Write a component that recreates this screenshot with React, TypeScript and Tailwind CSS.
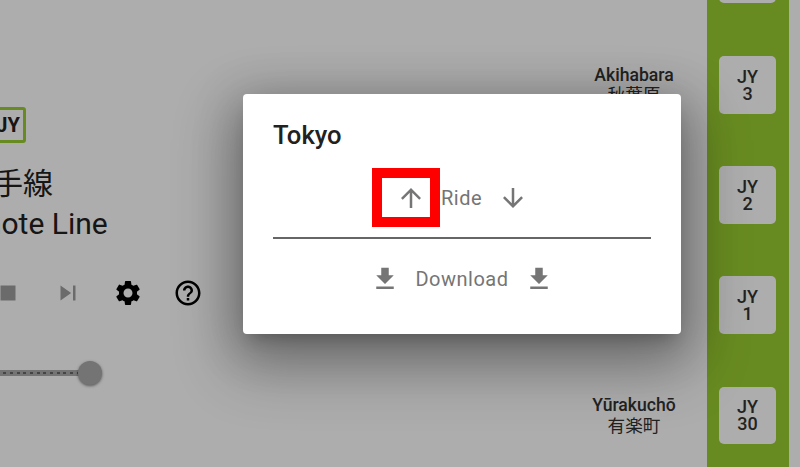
import type { ReactNode } from "react";

const LINE_STATIONS = [
  { code: "4", en: "Okachimachi", ja: "御徒町" },
  { code: "3", en: "Akihabara", ja: "秋葉原" },
  { code: "2", en: "Kanda", ja: "神田" },
  { code: "1", en: "Tokyo", ja: "東京" },
  { code: "30", en: "Yūrakuchō", ja: "有楽町" },
];

const ICONS = {
  play: "M8 5v14l11-7z",
  stop: "M6 6h12v12H6z",
  skip: "M6 18l8.5-6L6 6v12zM16 6v12h2V6h-2z",
  settings:
    "M19.14,12.94c0.04-0.3,0.06-0.61,0.06-0.94c0-0.32-0.02-0.64-0.07-0.94l2.03-1.58c0.18-0.14,0.23-0.41,0.12-0.61 l-1.92-3.32c-0.12-0.22-0.37-0.29-0.59-0.22l-2.39,0.96c-0.5-0.38-1.03-0.7-1.62-0.94L14.4,2.81c-0.04-0.24-0.24-0.41-0.48-0.41 h-3.84c-0.24,0-0.43,0.17-0.47,0.41L9.25,5.35C8.66,5.59,8.12,5.92,7.63,6.29L5.24,5.33c-0.22-0.08-0.47,0-0.59,0.22L2.74,8.87 C2.62,9.08,2.66,9.34,2.86,9.48l2.03,1.58C4.84,11.36,4.8,11.69,4.8,12s0.02,0.64,0.07,0.94l-2.03,1.58 c-0.18,0.14-0.23,0.41-0.12,0.61l1.92,3.32c0.12,0.22,0.37,0.29,0.59,0.22l2.39-0.96c0.5,0.38,1.03,0.7,1.62,0.94l0.36,2.54 c0.05,0.24,0.24,0.41,0.48,0.41h3.84c0.24,0,0.44-0.17,0.47-0.41l0.36-2.54c0.59-0.24,1.13-0.56,1.62-0.94l2.39,0.96 c0.22,0.08,0.47,0,0.59-0.22l1.92-3.32c0.12-0.22,0.07-0.47-0.12-0.61L19.14,12.94z M12,15.6c-1.98,0-3.6-1.62-3.6-3.6 s1.62-3.6,3.6-3.6s3.6,1.62,3.6,3.6S13.98,15.6,12,15.6z",
  help: "M11 18h2v-2h-2v2zm1-16C6.48 2 2 6.48 2 12s4.48 10 10 10 10-4.48 10-10S17.52 2 12 2zm0 18c-4.41 0-8-3.59-8-8s3.59-8 8-8 8 3.59 8 8-3.59 8-8 8zm0-14c-2.21 0-4 1.79-4 4h2c0-1.1.9-2 2-2s2 .9 2 2c0 2-3 1.75-3 5h2c0-2.25 3-2.5 3-5 0-2.21-1.79-4-4-4z",
  up: "M4 12l1.41 1.41L11 7.83V20h2V7.83l5.58 5.59L20 12l-8-8-8 8z",
  down: "M20 12l-1.41-1.41L13 16.17V4h-2v12.17l-5.58-5.59L4 12l8 8 8-8z",
  download: "M19 9h-4V3H9v6H5l7 7 7-7zM5 18v2h14v-2H5z",
};

function Icon({ d, className }: { d: string; className: string }) {
  return (
    <svg viewBox="0 0 24 24" className={`h-[30px] w-[30px] shrink-0 fill-current ${className}`}>
      <path d={d} />
    </svg>
  );
}

function ControlButton({ children }: { children: ReactNode }) {
  return <div className="flex w-[60px] justify-center">{children}</div>;
}

function StationRow({ code, en, ja }: { code: string; en: string; ja: string }) {
  return (
    <div className="flex h-[57.8px] items-center">
      <div className="w-[170px] shrink-0 pt-[1px] text-center text-[17.6px] leading-[20.5px] text-[#333333]">
        <div className="font-medium">{en}</div>
        <div>{ja}</div>
      </div>
      <div className="flex h-[57.8px] w-[57px] shrink-0 flex-col items-center justify-center rounded-[5px] bg-white text-center text-[18px] leading-[17px] font-medium text-[#333333]">
        <span>JY</span>
        <span>{code}</span>
      </div>
    </div>
  );
}

export default function App() {
  return (
    <div className="relative flex h-[467px] w-[800px] overflow-hidden bg-white font-['Roboto','Noto_Sans_CJK_JP',sans-serif]">
      {/* left panel runs off the edge of the page */}
      <div className="ml-[-82px] flex w-[300px] shrink-0 flex-col items-start pt-[107px]">
        <div className="ml-[72px] flex h-[36px] w-[36px] items-center justify-center rounded-[3px] border-[3px] border-[#9acd32] text-[20px] font-bold text-[#212121]">
          JY
        </div>
        <div className="mt-[23px] ml-[45px] text-[30px] leading-[36px] text-[#212121]">山手線</div>
        <div className="mt-[2px] ml-[-9px] text-[30px] leading-[40px] whitespace-nowrap text-[#212121]">
          Yamanote Line
        </div>
        <div className="mt-[34px] flex items-center">
          <ControlButton>
            <Icon d={ICONS.play} className="text-[#9e9e9e]" />
          </ControlButton>
          <ControlButton>
            <Icon d={ICONS.stop} className="text-[#9e9e9e]" />
          </ControlButton>
          <ControlButton>
            <Icon d={ICONS.skip} className="text-[#9e9e9e]" />
          </ControlButton>
          <ControlButton>
            <Icon d={ICONS.settings} className="text-black" />
          </ControlButton>
          <ControlButton>
            <Icon d={ICONS.help} className="text-black" />
          </ControlButton>
        </div>
        <div className="mt-[52px] ml-[32px] flex h-[26px] items-center">
          <div className="flex h-[6px] w-[129px] items-center bg-[#ababab]">
            <div className="h-[2px] w-full bg-[repeating-linear-gradient(90deg,#666666_0_3px,#ababab_3px_6.67px)]" />
          </div>
          <div className="-ml-[1px] h-[24px] w-[24px] rounded-full bg-[#ababab] shadow-[0_1px_3px_rgba(0,0,0,0.5)]" />
        </div>
      </div>

      <div className="flex-1" />

      {/* station line */}
      <div className="absolute top-0 right-[11px] h-[467px] w-[82px] bg-[#9acd32]" />
      <div className="relative mt-[-54.6px] mr-[24px] flex shrink-0 flex-col gap-[52.5px]">
        {LINE_STATIONS.map((station) => (
          <StationRow key={station.code} {...station} />
        ))}
      </div>

      {/* modal backdrop */}
      <div className="absolute inset-0 flex bg-black/32">
        <div className="mt-[94px] ml-[243px] flex h-[240px] w-[438px] flex-col rounded-[4px] bg-white px-[30px] shadow-[0_11px_15px_-7px_rgba(0,0,0,0.2),0_24px_60px_10px_rgba(0,0,0,0.3),0_9px_46px_8px_rgba(0,0,0,0.16)]">
          <div className="mt-[24px] text-[25.6px] leading-[34px] font-medium text-[#212121]">Tokyo</div>
          <div className="mt-[16px] flex h-[59px] items-center justify-center pr-[24px]">
            <div className="flex h-[59px] w-[68px] shrink-0 items-center justify-end border-[10px] border-[#ff0000] pr-[4px]">
              <Icon d={ICONS.up} className="text-[#757575]" />
            </div>
            <span className="ml-[1px] text-[20px] tracking-[0.5px] text-[#757575]">Ride</span>
            <Icon d={ICONS.down} className="ml-[16px] text-[#757575]" />
          </div>
          <div className="mt-[10px] h-[2px] w-full bg-[#666666]" />
          <div className="mt-[25px] flex items-center justify-center">
            <Icon d={ICONS.download} className="text-[#757575]" />
            <span className="mx-[15px] text-[20px] tracking-[0.5px] text-[#757575]">Download</span>
            <Icon d={ICONS.download} className="text-[#757575]" />
          </div>
        </div>
      </div>
    </div>
  );
}
